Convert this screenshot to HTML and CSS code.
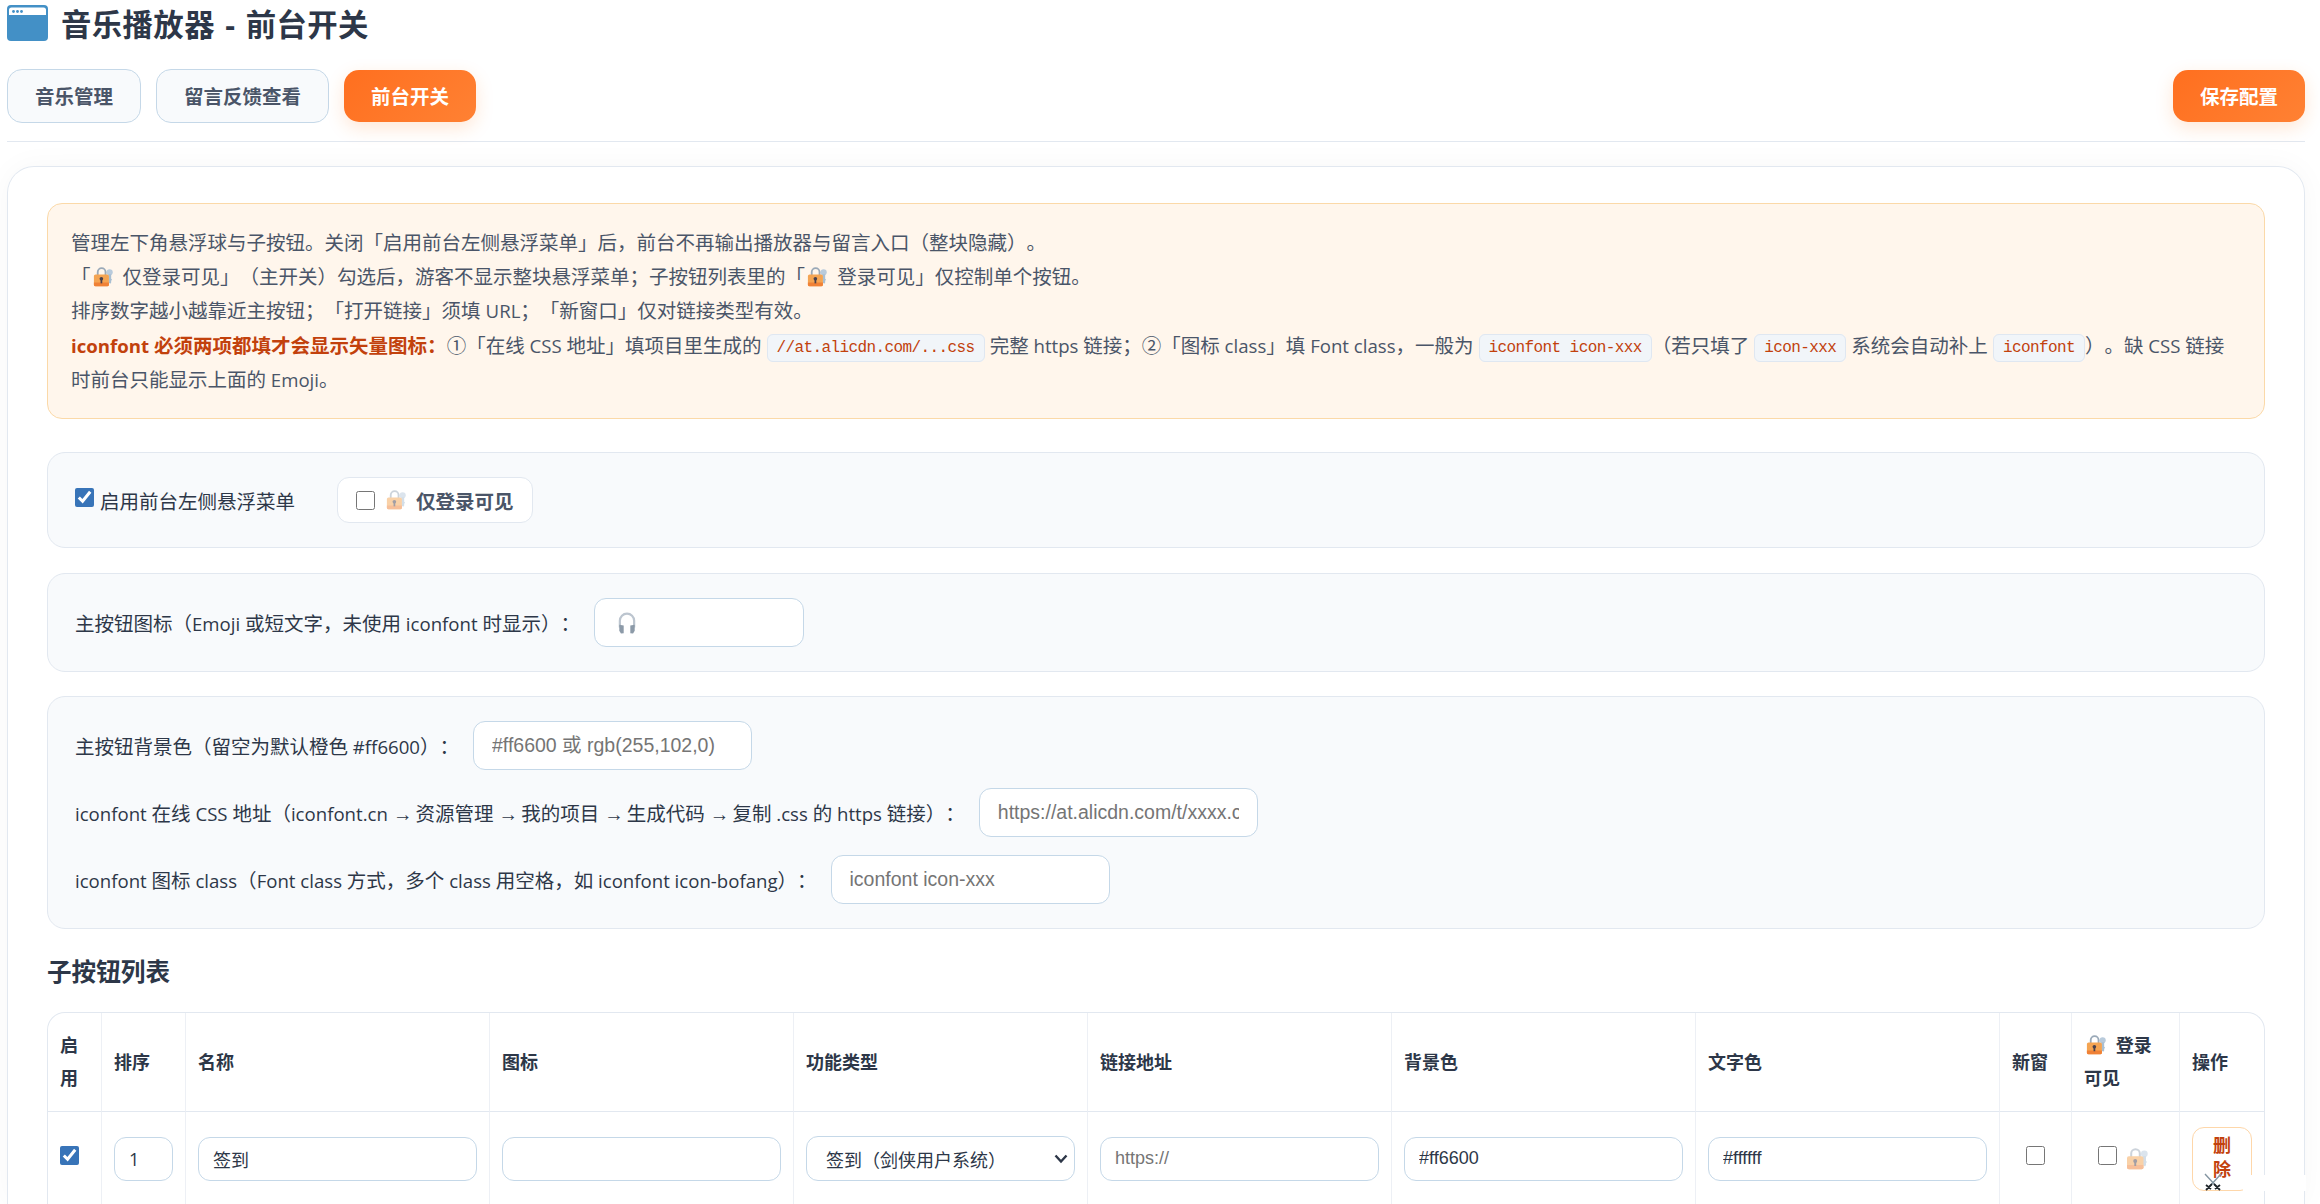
FILE: index.html
```html
<!DOCTYPE html>
<html lang="zh-CN">
<head>
    <meta charset="UTF-8">
    <meta name="viewport" content="width=device-width, initial-scale=1.0">
    <title>音乐播放器 - 前台开关</title>
    <link rel="stylesheet" href="styles.css">
</head>
<body>
    <svg class="sprite" width="0" height="0">
        <symbol id="lock" viewBox="0 0 22 22">
            <circle cx="18.3" cy="5.8" r="3.4" fill="#b9cbdc"/>
            <path d="M17 8v9l2 1.5 1-1.5v-2l1-1-1-1V8z" fill="#a9bfd2"/>
            <path d="M5.2 9V5.6a4.3 4.3 0 0 1 8.6 0V9" fill="none" stroke="#9aa9b8" stroke-width="2"/>
            <rect x="1" y="8.2" width="16.5" height="13" rx="1.8" fill="#f4a452"/>
            <path d="M1 17h16.5v2.4a1.8 1.8 0 0 1-1.8 1.8H2.8A1.8 1.8 0 0 1 1 19.4z" fill="#f08136"/>
            <circle cx="9.2" cy="13" r="2" fill="#48404d"/>
            <path d="M8.3 13h1.9v5H8.3z" fill="#48404d"/>
        </symbol>
    </svg>

    <div class="title">
        <svg class="title-icon" viewBox="0 0 41 36">
            <rect width="41" height="36" rx="4" fill="#4390c6"/>
            <path d="M2 10V5q0-2.5 2.500-2.500h32Q39 2.500 39 5v5z" fill="#fff"/>
            <g fill="#4390c6"><circle cx="6.500" cy="6.500" r="1.400"/><circle cx="10.500" cy="6.500" r="1.400"/><circle cx="14.500" cy="6.500" r="1.400"/></g>
        </svg>
        <h1>音乐播放器 - 前台开关</h1>
    </div>

    <div class="toolbar">
        <a class="tab">音乐管理</a>
        <a class="tab">留言反馈查看</a>
        <a class="tab active">前台开关</a>
        <button class="save">保存配置</button>
    </div>

    <div class="card">
        <div class="notice">
            管理左下角悬浮球与子按钮。关闭「启用前台左侧悬浮菜单」后，前台不再输出播放器与留言入口（整块隐藏）。<br>
            「<svg class="emoji"><use href="#lock"/></svg> 仅登录可见」（主开关）勾选后，游客不显示整块悬浮菜单；子按钮列表里的「<svg class="emoji"><use href="#lock"/></svg> 登录可见」仅控制单个按钮。<br>
            排序数字越小越靠近主按钮；「打开链接」须填 <span class="en">URL</span>；「新窗口」仅对链接类型有效。<br>
            <strong><span class="en">iconfont</span> 必须两项都填才会显示矢量图标：</strong>①「在线<span class="en"> CSS </span>地址」填项目里生成的 <code>//at.alicdn.com/...css</code> 完整<span class="en"> https </span>链接；②「图标<span class="en"> class</span>」填<span class="en"> Font class</span>，一般为 <code>iconfont icon-xxx</code>（若只填了 <code>icon-xxx</code> 系统会自动补上 <code>iconfont</code>）。缺<span class="en"> CSS </span>链接<br>时前台只能显示上面的<span class="en"> Emoji</span>。
        </div>

        <div class="panel panel-switch">
            <label class="enable"><input type="checkbox" checked><span>启用前台左侧悬浮菜单</span></label>
            <label class="chip"><input type="checkbox"><svg class="emoji faded"><use href="#lock"/></svg><strong>仅登录可见</strong></label>
        </div>

        <div class="panel panel-icon">
            <label>主按钮图标（<span class="en">Emoji </span>或短文字，未使用<span class="en"> iconfont </span>时显示）：</label>
            <span class="field field-icon">
                <svg class="headphone" viewBox="0 0 18 20">
                    <path d="M2.500 14V8a6.500 6.500 0 0 1 13 0v6" fill="none" stroke="#bcc5cf" stroke-width="2"/>
                    <path d="M2 11.500l4 .8v7l-2.500.2L2 17z" fill="#8c9aa8"/>
                    <path d="M16 11.500l-4 .8v7l2.500.2L16 17z" fill="#8c9aa8"/>
                </svg>
            </span>
        </div>

        <div class="panel panel-style">
            <div class="line">
                <label>主按钮背景色（留空为默认橙色<span class="en"> #ff6600</span>）：</label>
                <input class="field" type="text" placeholder="#ff6600 或 rgb(255,102,0)">
            </div>
            <div class="line">
                <label><span class="en">iconfont </span>在线<span class="en"> CSS </span>地址（<span class="en">iconfont.cn</span> <i>→</i> 资源管理 <i>→</i> 我的项目 <i>→</i> 生成代码 <i>→</i> 复制<span class="en"> .css </span>的<span class="en"> https </span>链接）：</label>
                <input class="field" type="text" placeholder="https://at.alicdn.com/t/xxxx.css">
            </div>
            <div class="line">
                <label><span class="en">iconfont </span>图标<span class="en"> class</span>（<span class="en">Font class </span>方式，多个<span class="en"> class </span>用空格，如<span class="en"> iconfont icon-bofang</span>）：</label>
                <input class="field" type="text" placeholder="iconfont icon-xxx">
            </div>
        </div>

        <h2>子按钮列表</h2>

        <div class="table-wrap">
            <table>
                <colgroup>
                    <col class="c-on"><col class="c-sort"><col class="c-text"><col class="c-text"><col class="c-type"><col class="c-text"><col class="c-text"><col class="c-text"><col class="c-new"><col class="c-login"><col>
                </colgroup>
                <thead>
                    <tr>
                        <th>启<br>用</th>
                        <th>排序</th>
                        <th>名称</th>
                        <th>图标</th>
                        <th>功能类型</th>
                        <th>链接地址</th>
                        <th>背景色</th>
                        <th>文字色</th>
                        <th>新窗</th>
                        <th><svg class="emoji"><use href="#lock"/></svg> 登录<br>可见</th>
                        <th>操作</th>
                    </tr>
                </thead>
                <tbody>
                    <tr>
                        <td><input class="row-check" type="checkbox" checked></td>
                        <td><input class="cell-input num" type="text" value="1"></td>
                        <td><input class="cell-input" type="text" value="签到"></td>
                        <td><input class="cell-input" type="text"></td>
                        <td>
                            <div class="select">签到（剑侠用户系统）
                                <svg width="14" height="10" viewBox="0 0 14 10"><path d="M1.500 1.500L7 7.500l5.500-6" fill="none" stroke="#2d3748" stroke-width="2.400"/></svg>
                            </div>
                        </td>
                        <td><input class="cell-input" type="text" placeholder="https://"></td>
                        <td><input class="cell-input" type="text" value="#ff6600"></td>
                        <td><input class="cell-input" type="text" value="#ffffff"></td>
                        <td class="center"><input class="row-check" type="checkbox"></td>
                        <td class="center"><input class="row-check" type="checkbox"><svg class="emoji faded"><use href="#lock"/></svg></td>
                        <td><button class="delete">删<br>除</button></td>
                    </tr>
                </tbody>
            </table>
        </div>
    </div>

    <!-- floating badge in the corner -->
    <div class="badge">
        <svg width="18" height="19" viewBox="0 0 18 19">
            <path d="M1 1l12 13M17 1L5 14" stroke="#8495a1" stroke-width="1.4"/>
            <path d="M10 11l6 6M8 11l-6 6M11 16l5-4M7 16l-5-4" stroke="#20262b" stroke-width="1.8"/>
        </svg>
        <span class="badge-bar"></span>
    </div>
</body>
</html>
```

FILE: styles.css
```css
* {
    box-sizing: border-box;
}

body {
    display: flex;
    flex-direction: column;
    margin: 0;
    padding: 0 15px 0 7px;
    height: 1204px;
    overflow: hidden;
    background: #fff;
    color: #2d3748;
    font-family: "Open Sans", "Noto Sans CJK SC", sans-serif;
    font-size: 19.5px;
    text-spacing-trim: space-all;
}

input,
button {
    font-family: "Liberation Sans", "Noto Sans CJK SC", sans-serif;
    color: #2d3748;
}

.sprite {
    position: absolute;
}

.en {
    font-size: 0.955em;
}

.title {
    display: flex;
    align-items: center;
    flex: none;
    height: 46px;
    padding-top: 5px;
}

.title-icon {
    width: 41px;
    height: 36px;
    margin-top: -5px;
}

h1 {
    margin: -1px 0 0 13px;
    font-size: 30.4px;
    line-height: 40px;
    letter-spacing: 0.4px;
    word-spacing: 2px;
    font-weight: 700;
}

.toolbar {
    display: flex;
    align-items: center;
    flex: none;
    height: 96px;
    padding: 4px 0 0;
    border-bottom: 1px solid #e2e8f0;
}

.tab,
.save {
    height: 54px;
    margin-right: 15px;
    padding: 0 27px;
    border: 1px solid #c5d8e8;
    border-radius: 15px;
    background: #f8fafc;
    color: #4a5568;
    font: 700 19.5px/51px "Noto Sans CJK SC", sans-serif;
}

.tab.active,
.save {
    height: 52px;
    padding: 0 27px;
    border: 0;
    background: linear-gradient(135deg, #ff6f1f, #ff8133);
    color: #fff;
    box-shadow: 0 6px 18px rgba(255, 120, 30, 0.18);
}

.save {
    margin: 0 0 0 auto;
    padding-bottom: 2px;
}

.card {
    flex: 1;
    min-height: 0;
    margin-top: 24px;
    padding: 36px 39px 0;
    border: 1px solid #e2e8f0;
    border-bottom: 0;
    border-radius: 27px 27px 0 0;
    box-shadow: 0 0 30px rgba(30, 50, 70, 0.035);
}

.notice {
    height: 216px;
    padding: 22px 23px;
    border: 1px solid #fbd9a8;
    border-radius: 15px;
    background: #fff6ec;
    color: #4a5568;
    line-height: 34.2px;
    white-space: nowrap;
}

.notice strong {
    color: #c2410c;
}

code {
    padding: 4px 9px;
    border: 1px solid #dfe7f1;
    border-radius: 6px;
    background: #f1f5f9;
    color: #c2410c;
    font-family: "Liberation Mono", monospace;
    font-size: 16px;
    line-height: 30px;
    letter-spacing: -0.6px;
    vertical-align: 1px;
}

.emoji {
    width: 20px;
    height: 20px;
    margin: 0 5px 0 2px;
    vertical-align: -3px;
}

.faded {
    opacity: 0.5;
}

.panel {
    border: 1px solid #e2e8f0;
    border-radius: 18px;
    background: #f8fafc;
    padding: 0 27px;
}

input[type="checkbox"] {
    width: 19px;
    height: 19px;
    margin: 0;
    accent-color: #3874b8;
    flex: none;
}

.panel-switch {
    display: flex;
    align-items: center;
    gap: 42px;
    height: 96px;
    margin-top: 33px;
}

.enable {
    display: flex;
    align-items: center;
    gap: 6px;
}

.enable input {
    margin-top: -5px;
}

.chip {
    display: flex;
    align-items: center;
    width: 196px;
    height: 46px;
    padding-left: 18px;
    border: 1px solid #e2e8f0;
    border-radius: 12px;
    background: #fff;
    color: #4a5568;
}

.chip .emoji {
    margin: 0 10px 0 11px;
}

.panel-icon {
    display: flex;
    align-items: center;
    height: 99px;
    margin-top: 25px;
}

.field {
    width: 279px;
    height: 49px;
    margin-left: 14px;
    padding: 0 18px;
    border: 1px solid #c5d8e8;
    border-radius: 12px;
    background: #fff;
    font-size: 19.5px;
}

.field-icon {
    display: flex;
    align-items: center;
    width: 210px;
    padding-left: 22px;
}

.headphone {
    width: 20px;
    height: 22px;
}

.panel-style {
    display: flex;
    flex-direction: column;
    gap: 18px;
    height: 233px;
    margin-top: 24px;
    padding-top: 24px;
}

.line {
    display: flex;
    align-items: center;
    white-space: nowrap;
}

.line i {
    font-family: "Liberation Sans", sans-serif;
    font-style: normal;
    letter-spacing: -2px;
}

::placeholder {
    color: #757575;
    opacity: 1;
}

h2 {
    margin: 26px 0 23px;
    font-size: 24.6px;
    line-height: 34px;
}

.table-wrap {
    border: 1px solid #e2e8f0;
    border-bottom: 0;
    border-radius: 18px 18px 0 0;
    overflow: hidden;
}

table {
    width: 100%;
    table-layout: fixed;
    border-collapse: separate;
    border-spacing: 0;
    font-size: 18px;
}

.c-on { width: 54px; }
.c-sort { width: 84px; }
.c-text { width: 304px; }
.c-type { width: 294px; }
.c-new { width: 72px; }
.c-login { width: 108px; }

th,
td {
    padding: 0 12px;
    border-right: 1px solid #edf0f5;
    text-align: left;
}

th:last-child,
td:last-child {
    border-right: 0;
}

th {
    height: 99px;
    border-bottom: 1px solid #e2e8f0;
    line-height: 33px;
    white-space: nowrap;
}

td {
    height: 93px;
    vertical-align: middle;
}

td.center {
    text-align: center;
    white-space: nowrap;
}

.row-check {
    vertical-align: middle;
    position: relative;
    top: -5px;
}

td .emoji {
    width: 22px;
    height: 22px;
    margin: 0 5px 0 9px;
    vertical-align: -4px;
}

.cell-input {
    display: block;
    width: 100%;
    height: 44px;
    padding: 0 14px;
    border: 1px solid #c5d8e8;
    border-radius: 12px;
    background: #fff;
    font-size: 18px;
}

.num {
    font-family: "Open Sans", sans-serif;
}

.select {
    display: flex;
    align-items: center;
    justify-content: space-between;
    height: 45px;
    padding: 0 6px 0 19px;
    border: 1px solid #c5d8e8;
    border-radius: 12px;
    white-space: nowrap;
}

.delete {
    display: block;
    width: 60px;
    height: 64px;
    padding: 0 0 5px;
    border: 1px solid #fed7aa;
    border-radius: 12px;
    background: #fff;
    color: #c2410c;
    font: 700 18px/24px "Noto Sans CJK SC", sans-serif;
}

.badge {
    position: absolute;
    right: 14px;
    top: 1173px;
    display: flex;
    gap: 21px;
}

.badge-bar {
    width: 63px;
    height: 16px;
    margin-top: 2px;
    background: #fff;
}
```
